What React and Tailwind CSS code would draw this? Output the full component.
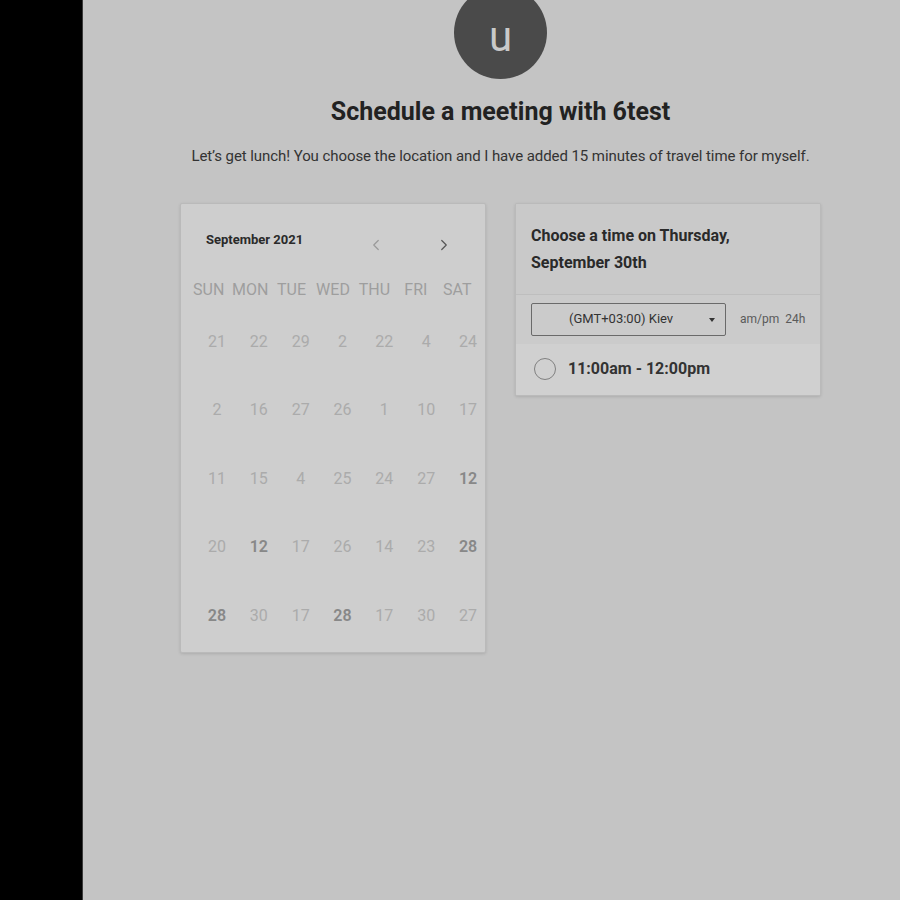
import { ChevronLeft, ChevronRight } from 'lucide-react';

const weekdays = ['SUN', 'MON', 'TUE', 'WED', 'THU', 'FRI', 'SAT'];

// [day, available]
const weeks = [
    [[21], [22], [29], [2], [22], [4], [24]],
    [[2], [16], [27], [26], [1], [10], [17]],
    [[11], [15], [4], [25], [24], [27], [12, true]],
    [[20], [12, true], [17], [26], [14], [23], [28, true]],
    [[28, true], [30], [17], [28, true], [17], [30], [27]],
];

function Calendar() {
    return (
        <div className="h-[450px] w-[306px] shrink-0 rounded-[2px] border border-[#bababa] bg-[#cecece] shadow-[0_1px_3px_rgba(0,0,0,0.12)]">
            <div className="flex items-center pl-[25px] pt-[23px]">
                <span className="text-[13px] font-bold text-[#2a2a2a]">September 2021</span>
                <ChevronLeft className="ml-[64px] mt-[9px] h-[18px] w-[18px] text-[#9a9a9a]" strokeWidth={1.6} />
                <ChevronRight className="ml-[50px] mt-[9px] h-[18px] w-[18px] text-[#555]" strokeWidth={1.6} />
            </div>

            <div className="mt-[24px] grid grid-cols-7 px-[7px]">
                {weekdays.map((d) => (
                    <div key={d} className="text-center text-[16px] text-[#9e9e9e]">
                        {d}
                    </div>
                ))}
            </div>

            <div className="mt-[24px] pl-[15px]">
                {weeks.map((week, i) => (
                    <div key={i} className="grid h-[68.5px] w-[293px] grid-cols-7 items-start">
                        {week.map(([day, available], j) => (
                            <div
                                key={j}
                                className={`pt-[4px] text-center text-[16px] ${
                                    available ? 'font-semibold text-[#888]' : 'text-[#ababab]'
                                }`}
                            >
                                {day}
                            </div>
                        ))}
                    </div>
                ))}
            </div>
        </div>
    );
}

function TimePicker() {
    return (
        <div className="w-[306px] shrink-0 overflow-hidden rounded-[2px] border border-[#bababa] bg-[#cbcbcb] shadow-[0_1px_3px_rgba(0,0,0,0.12)]">
            <div className="border-b border-[#bebebe] bg-[#c9c9c9] px-[15px] pb-[18px] pt-[18px]">
                <h3 className="text-[16px] font-bold leading-[27px] text-[#2a2a2a]">
                    Choose a time on Thursday,
                    <br />
                    September 30th
                </h3>
            </div>

            <div className="flex items-center px-[15px] py-[8px]">
                <div className="relative flex h-[33px] w-[195px] shrink-0 items-center rounded-[2px] border border-[#6a6a6a] pl-[37px]">
                    <span className="text-[13px] text-[#333]">(GMT+03:00) Kiev</span>
                    <span className="absolute right-[10px] top-[14px] h-0 w-0 border-x-[3.5px] border-t-[4px] border-x-transparent border-t-[#333]" />
                </div>
                <span className="ml-[14px] text-[12px] text-[#5a5a5a]">am/pm</span>
                <span className="ml-[6px] text-[12px] text-[#5a5a5a]">24h</span>
            </div>

            <div className="flex h-[51px] items-center bg-[#d0d0d0] px-[18px]">
                <span className="h-[22px] w-[22px] rounded-full border-[1.5px] border-[#808080]" />
                <span className="ml-[12px] text-[16px] font-bold text-[#333]">11:00am - 12:00pm</span>
            </div>
        </div>
    );
}

export default function App() {
    return (
        <div className="flex h-[900px] w-[900px] overflow-hidden bg-[#c4c4c4] font-['Roboto',sans-serif]">
            <aside className="w-[82px] shrink-0 bg-black" />

            <main className="flex-1 border-l border-[#3a3a3a]">
                <div className="ml-[97px] w-[641px]">
                    <div className="flex justify-center">
                        <div className="-mt-[14px] flex h-[93px] w-[93px] items-center justify-center rounded-full bg-[#4a4a4a]">
                            <span className="mt-[8px] text-[42px] leading-none text-[#c9c9c9]">u</span>
                        </div>
                    </div>

                    <h1 className="mt-[18px] text-center text-[25px] font-bold leading-[30px] text-[#222]">
                        Schedule a meeting with 6test
                    </h1>

                    <p className="mt-[18px] text-center text-[15px] tracking-[-0.07px] text-[#333]">
                        Let’s get lunch! You choose the location and I have added 15 minutes of travel time for myself.
                    </p>

                    <div className="mt-[35px] flex items-start gap-[29px]">
                        <Calendar />
                        <TimePicker />
                    </div>
                </div>
            </main>
        </div>
    );
}
